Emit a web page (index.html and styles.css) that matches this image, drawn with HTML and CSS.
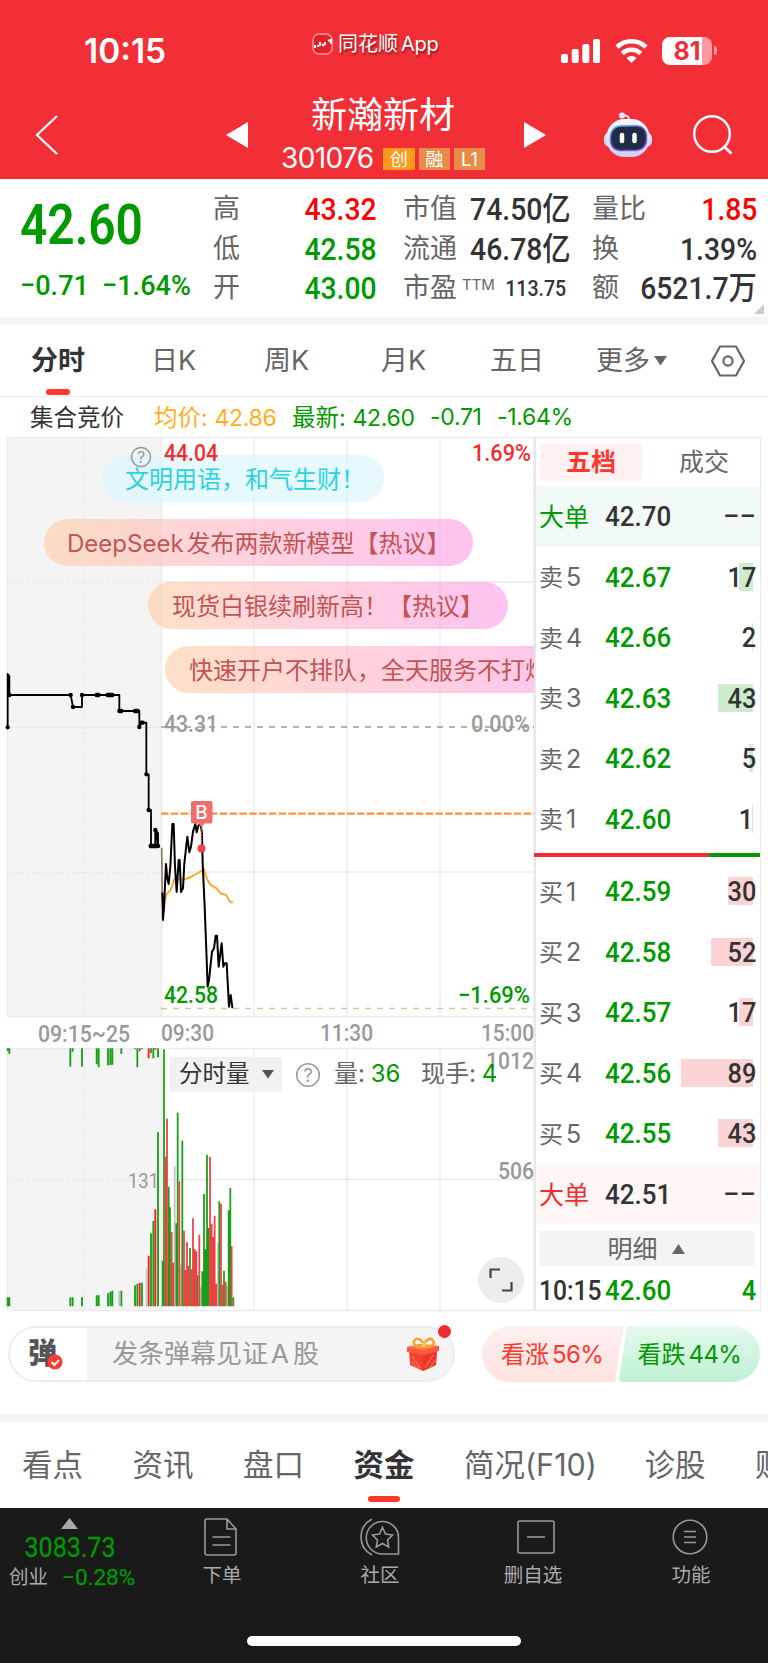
FILE: index.html
```html
<!DOCTYPE html>
<html lang="zh-CN">
<head>
<meta charset="utf-8">
<title>新瀚新材 301076</title>
<link rel="stylesheet" href="styles.css">
</head>
<body>
<header class="top">
  <div class="status">
    <span class="clock">10:15</span>
    <div class="brand">
      <svg width="21" height="22" viewBox="0 0 21 22"><rect x="1" y="1" width="19" height="20" rx="6" fill="#e32027" stroke="#ff9a98" stroke-width="1.5"/><path d="M3 12v3M5 13h2M8 9v4M10 11l2 2M13 9v3M16 8l3-1v4" stroke="#fff" stroke-width="2" fill="none"/></svg>
      <span>同花顺<span class="latin">App</span></span>
    </div>
    <div class="signals">
      <svg width="40" height="26" viewBox="0 0 40 26" fill="#fff"><rect x="0" y="16" width="7" height="9" rx="2"/><rect x="10.7" y="11" width="7" height="14" rx="2"/><rect x="21.3" y="6" width="7" height="19" rx="2"/><rect x="32" y="1" width="7" height="24" rx="2"/></svg>
      <svg width="33" height="26" viewBox="0 0 33 26" fill="none" stroke="#fff" stroke-width="4.600"><path d="M2 9a21 21 0 0 1 29 0"/><path d="M7.300 15.500a13 13 0 0 1 18.400 0"/><path d="M16.500 25l-5-5a7.500 7.500 0 0 1 10 0z" fill="#fff" stroke="none"/></svg>
      <div class="battery"><span>81</span></div>
    </div>
  </div>
  <nav class="nav">
    <svg class="back" width="24" height="42" viewBox="0 0 24 42"><path d="M22 2L2 21l20 19" fill="none" stroke="#fff" stroke-width="2.200"/></svg>
    <svg class="prev" width="22" height="26" viewBox="0 0 22 26"><path d="M22 0v26L0 13z" fill="#fff"/></svg>
    <div class="stock">
      <h1>新瀚新材</h1>
      <div class="code"><span class="code-num">301076</span><b class="hot">创</b><b>融</b><b class="lv">L1</b></div>
    </div>
    <svg class="next" width="22" height="26" viewBox="0 0 22 26"><path d="M0 0v26l22-13z" fill="#fff"/></svg>
    <svg class="robot" width="48" height="46" viewBox="0 0 48 46">
      <defs>
        <linearGradient id="shell" x1="0" y1="0" x2="0" y2="1"><stop offset="0" stop-color="#f6faff"/><stop offset="1" stop-color="#cfd0f0"/></linearGradient>
        <linearGradient id="rim" x1="0" y1="0" x2="1" y2="1"><stop offset="0" stop-color="#59c5f0"/><stop offset=".5" stop-color="#5a45b8"/><stop offset="1" stop-color="#a86bea"/></linearGradient>
      </defs>
      <path d="M25 9q1-6-7-6" fill="none" stroke="#dfe9fb" stroke-width="2"/><circle cx="18" cy="3.500" r="3" fill="#e5efff"/>
      <rect x="0" y="20" width="48" height="15" rx="6" fill="#d7dcf6"/>
      <rect x="2.500" y="7" width="43" height="38" rx="18" fill="url(#shell)"/>
      <rect x="6.500" y="14" width="36" height="24.500" rx="10" fill="#202b49" stroke="url(#rim)" stroke-width="1.500"/>
      <path d="M18 23v6M30.500 23v6" stroke="#fff" stroke-width="4.500" stroke-linecap="round"/>
    </svg>
    <svg class="search" width="40" height="42" viewBox="0 0 40 42"><circle cx="19" cy="20" r="17.800" fill="none" stroke="#fff" stroke-width="2.400"/><path d="M31 32.500l7.500 7" stroke="#fff" stroke-width="2.700"/></svg>
  </nav>
</header>

<section class="quote">
  <div class="last down">
    <div class="price"><span class="din">42.60</span></div>
    <div class="delta"><span class="din">−0.71</span><span class="din">−1.64%</span></div>
  </div>
  <dl class="col hi">
    <div><dt>高</dt><dd class="up din">43.32</dd></div>
    <div><dt>低</dt><dd class="down din">42.58</dd></div>
    <div><dt>开</dt><dd class="down din">43.00</dd></div>
  </dl>
  <dl class="col cap">
    <div><dt>市值</dt><dd class="din">74.50亿</dd></div>
    <div><dt>流通</dt><dd class="din">46.78亿</dd></div>
    <div><dt>市盈<sup>TTM</sup></dt><dd class="din small">113.75</dd></div>
  </dl>
  <dl class="col vol">
    <div><dt>量比</dt><dd class="up din">1.85</dd></div>
    <div><dt>换</dt><dd class="din">1.39%</dd></div>
    <div><dt>额</dt><dd class="din">6521.7万</dd></div>
  </dl>
  <i class="corner"></i>
</section>

<nav class="tabs">
  <span class="on">分时</span><span>日K</span><span>周K</span><span>月K</span><span>五日</span>
  <span class="more">更多<svg width="13" height="10" viewBox="0 0 13 10"><path d="M0 0h13L6.500 9.500z" fill="#666"/></svg></span>
  <svg class="gear" width="34" height="32" viewBox="0 0 34 32" fill="none" stroke="#666" stroke-width="2.200"><path d="M9 1.500h16L33 16l-8 14.500H9L1 16z"/><circle cx="17" cy="16" r="4.600"/></svg>
</nav>

<div class="legend">
  <span>集合竞价</span><span class="avg">均价: <em>42.86</em></span><span class="down now">最新: <em>42.60</em></span><em class="down d1">-0.71</em><em class="down">-1.64%</em>
</div>

<main class="board">
  <div class="chart">
    <svg width="535" height="875" viewBox="0 437 535 875">
      <g fill="#f4f4f4"><rect x="7" y="437" width="154" height="579"/><rect x="7" y="1048" width="154" height="262"/></g>
      <path d="M7 437.500H535M161 582H535M7 727.500H161M161 872H535M7 1016.500H535M7 1048.500H535M161 1179.500H535M7 1310.500H535M7.500 437V1016M7.500 1048V1310M161.500 437V1016M254 437V1016M347 437V1016M440 437V1016M254 1048V1310M347 1048V1310M440 1048V1310M161.500 1048V1310M534 437V1310" class="grid"/>
      <path d="M85 437V1016M85 1048V1310M7 582.500H161M7 873H161M7 1180.500H161" class="grid dots"/>
      <path d="M161 727H534" stroke="#999" stroke-width="1.500" stroke-dasharray="6 6"/>
      <path d="M161 1008.500H534" stroke="#dfc29a" stroke-width="1.500" stroke-dasharray="6 6"/>
      <path d="M161 813.700H534" stroke="#ff913d" stroke-width="2.300" stroke-dasharray="7.500 2.300"/>
      <g class="axis">
        <text x="164" y="731.500" textLength="54" lengthAdjust="spacingAndGlyphs" class="muted">43.31</text>
        <text x="471" y="731.500" textLength="59" lengthAdjust="spacingAndGlyphs" class="muted">0.00%</text>
        <text x="458" y="1002.500" textLength="72" lengthAdjust="spacingAndGlyphs" fill="#090">−1.69%</text>
        <text x="38" y="1041.500" textLength="92" lengthAdjust="spacingAndGlyphs" class="muted">09:15~25</text>
        <text x="161" y="1040.500" textLength="53" lengthAdjust="spacingAndGlyphs" class="muted">09:30</text>
        <text x="320" y="1040.500" textLength="53" lengthAdjust="spacingAndGlyphs" class="muted">11:30</text>
        <text x="481" y="1040.500" textLength="53" lengthAdjust="spacingAndGlyphs" class="muted">15:00</text>
        <text x="486" y="1068.500" textLength="48" lengthAdjust="spacingAndGlyphs" class="muted">1012</text>
        <text x="498" y="1178.500" textLength="36" lengthAdjust="spacingAndGlyphs" class="muted">506</text>
        <text x="128" y="1187.500" textLength="31" lengthAdjust="spacingAndGlyphs" class="muted tiny">131</text>
      </g>
      <g transform="translate(0 660) scale(.33333)" fill="none" stroke-linejoin="round" stroke-linecap="round">
        <path d="M487 775L498 705 512 690 524 655Q545 664 570 652T612 627Q620 665 635 677L650 685 662 700 678 705 690 725 697 727" stroke="#ffa51f" stroke-width="5.500"/>
        <path d="M485 565L487 720" stroke="#8a7c66" stroke-width="5"/>
        <path d="M23 200V42L28 48V105H212L219 141H246V105H358V153H418V200L426 188H439V343H446V450H453V558H474L466 510" stroke="#000" stroke-width="5.500"/>
        <path d="M467 510L474 520V558M466 510V558" stroke="#000" stroke-width="6"/>
        <path d="M487 700L489 780 492 740 498 612 502 655 506 672 511 620 517 492H521L525 620 530 696 536 600H539L543 696 549 685 553 610 562 530 568 577 573 560 579 515 586 492 590 517 595 497 602 492 606 520 608 610 614 740 619 870 623 980 627 960 636 875 642 865 647 827H651L656 920 665 850 670 920 674 910H680L687 1040 692 1005 697 1042" stroke="#000" stroke-width="6"/>
        <path d="M23 202h0M28 105h0M212 105h0M219 141h0M246 105h0M290 105h5M323 105h14M358 153h6M405 153h8M418 201h0M424 188h4M439 343h0M446 450h0M452 558h22M466 510h0" stroke="#000" stroke-width="13"/>
      </g>
      <text x="164" y="1002.500" class="axis" textLength="54" lengthAdjust="spacingAndGlyphs" fill="#090">42.58</text>
      <g><path d="M193 801h17.500q2 0 2 2v18.500q0 2-2 2h-6l-3 4-3-4H193q-2 0-2-2V803q0-2 2-2z" fill="#f26e6e"/><text x="201.500" y="819" text-anchor="middle" class="buy">B</text><path d="M201.500 828v16" stroke="#ed4048" stroke-width="1.200" stroke-dasharray="2 1"/><circle cx="201.500" cy="848.500" r="4" fill="#ed4048"/></g>
      <g transform="translate(0 1010) scale(.33333)" fill="none" stroke-width="5.500">
        <path class="g" d="M23 115v8M28 115v17M211 115v55M218 115v10M246 115v55M290 115v48M296 115v57M324 115v51M331 115v51M337 115v49M364 115v17M405 115v3M412 115v57M426 115v3M453 115v14M460 115v30M474 115v27M23 889V862M28 889V862M211 889V862M218 889V862M246 889V862M290 889V856M296 889V856M324 889V850M331 889V845M337 889V842M364 889V842M405 889V826M412 889V821M426 889V818M453 889V670M460 889V633M474 889V367"/>
        <path class="r" d="M419 115v8M446 115v30M466 115v4M419 889V818M446 889V737M466 889V598"/>
        <path class="n" d="M358 889V842M440 889V776"/>
      </g>
      <g transform="translate(0 1010) scale(.33333)" fill="none" stroke-width="5.300">
        <path class="n" d="M524 889V470M543 889V764M603 889V832M654 889V700M681 889V828"/>
        <path class="g" d="M488 889V752M492 889V118M506 889V530M510 889V592M529 889V640M533 889V308M547 889V392M570 889V714M593 889V796M607 889V784M612 889V552M617 889V718M621 889V434M626 889V654M658 889V574M672 889V782M686 889V601M691 889V534M700 889V862"/>
        <path class="r2" d="M497 889V440M501 889V326M515 889V666M520 889V758M538 889V514M552 889V662M556 889V780M561 889V697M566 889V768M575 889V778M579 889V625M584 889V717M589 889V724M598 889V674M630 889V440M635 889V641M640 889V681M644 889V617M649 889V821M663 889V581M667 889V824M677 889V815M695 889V709"/>
      </g>
    </svg>
    <div class="danmu cyan">文明用语，和气生财！</div>
    <div class="danmu d2">DeepSeek<span>发布两款新模型【热议】</span></div>
    <div class="danmu d3">现货白银续刷新高！【热议】</div>
    <div class="danmu d4">快速开户不排队，全天服务不打烊</div>
    <svg class="overlay" width="535" height="40" viewBox="0 437 535 40">
      <g class="q"><circle cx="141" cy="457" r="9.500"/><text x="141" y="463" text-anchor="middle">?</text></g>
      <g class="axis" fill="#f22c30">
        <text x="164" y="460.500" textLength="54" lengthAdjust="spacingAndGlyphs">44.04</text>
        <text x="472" y="460.500" textLength="59" lengthAdjust="spacingAndGlyphs">1.69%</text>
      </g>
    </svg>
    <div class="volbar">
      <span class="pick">分时量<svg width="12" height="9" viewBox="0 0 12 9"><path d="M0 0h12L6 8.500z" fill="#555"/></svg></span>
      <svg class="help" width="26" height="26" viewBox="0 0 26 26"><circle cx="13" cy="13" r="11.300"/><text x="13" y="19.500" text-anchor="middle">?</text></svg>
      <span class="v1">量: <em>36</em></span><span class="v2">现手: <em>4</em></span>
    </div>
    <div class="expand"><svg width="24" height="24" viewBox="0 0 24 24" fill="none" stroke="#444" stroke-width="2.200"><path d="M1.500 10V1.500H11M22.500 14v8.500H13"/></svg></div>
  </div>

  <aside class="depth">
    <div class="dtabs"><b>五档</b><span>成交</span></div>
    <div class="row big sellbig"><span>大单</span><i class="din">42.70</i><u class="din dash">−−</u></div>
    <div class="row"><span>卖<s>5</s></span><i class="din">42.67</i><u class="din">17</u><q style="width:14px"></q></div>
    <div class="row"><span>卖<s>4</s></span><i class="din">42.66</i><u class="din">2</u><q style="width:1.500px"></q></div>
    <div class="row"><span>卖<s>3</s></span><i class="din">42.63</i><u class="din">43</u><q style="width:35px"></q></div>
    <div class="row"><span>卖<s>2</s></span><i class="din">42.62</i><u class="din">5</u><q style="width:4px"></q></div>
    <div class="row"><span>卖<s>1</s></span><i class="din">42.60</i><u class="din one">1</u><q style="width:1px"></q></div>
    <div class="ratio"></div>
    <div class="row bid"><span>买<s>1</s></span><i class="din">42.59</i><u class="din">30</u><q style="width:25px"></q></div>
    <div class="row bid"><span>买<s>2</s></span><i class="din">42.58</i><u class="din">52</u><q style="width:42px"></q></div>
    <div class="row bid"><span>买<s>3</s></span><i class="din">42.57</i><u class="din">17</u><q style="width:14px"></q></div>
    <div class="row bid"><span>买<s>4</s></span><i class="din">42.56</i><u class="din">89</u><q style="width:72px"></q></div>
    <div class="row bid"><span>买<s>5</s></span><i class="din">42.55</i><u class="din">43</u><q style="width:35px"></q></div>
    <div class="row big buybig"><span>大单</span><i class="din">42.51</i><u class="din dash">−−</u></div>
    <div class="detail">明细<svg width="13" height="10" viewBox="0 0 13 10"><path d="M0 10h13L6.500 0z" fill="#666"/></svg></div>
    <div class="row tick"><span class="din">10:15</span><i class="din">42.60</i><u class="din down">4</u></div>
  </aside>
</main>

<section class="talk">
  <div class="input">
    <div class="dan">弹<svg width="16" height="16" viewBox="0 0 16 16"><circle cx="8" cy="8" r="7.500" fill="#fb3b34"/><path d="M4.500 8l3 3 4.500-5" fill="none" stroke="#fff" stroke-width="2"/></svg></div>
    <span>发条弹幕见证<span class="latin">A</span>股</span>
    <svg class="gift" width="32" height="36" viewBox="0 0 32 36"><path d="M2 12l14 4 14-4-1 16-13 6-13-6z" fill="#f0442f"/><path d="M16 16l14-4-1 16-13 6z" fill="#e8382a"/><path d="M0 10l14-3 18 2v5l-15 4-17-3z" fill="#fb5a40"/><path d="M0 10l14-3 18 2-15 4z" fill="#ff7a58"/><path d="M18 31l8-13M22 32l7-10M5 19l8 12M4 24l6 7" stroke="#ff9168" stroke-width=".8"/><path d="M17 9C9 11 5 7 7.500 3.500s8-1.500 9.500 5.500c1-7 7-8.500 9-5.500s-1 7.500-9 5.500z" fill="none" stroke="#f2a52f" stroke-width="2.600"/><circle cx="17" cy="7.500" r="2.500" fill="#ffca55"/></svg>
    <i class="reddot"></i>
  </div>
  <div class="vote"><span class="bull">看涨<em>56%</em></span><span class="bear">看跌<em>44%</em></span></div>
</section>

<nav class="subtabs"><span>看点</span><span>资讯</span><span>盘口</span><span class="on">资金</span><span class="f10">简况<em>(F10)</em></span><span>诊股</span><span>财务</span></nav>

<footer class="dock">
  <div class="items">
    <div class="index"><svg width="17" height="11" viewBox="0 0 17 11"><path d="M0 11h17L8.500 0z" fill="#aaa"/></svg><strong class="din">3083.73</strong><div><span>创业</span><em class="din">−0.28%</em></div></div>
    <div class="item i1"><svg width="36" height="38" viewBox="0 0 36 38"><path d="M4 1h20l9 10v24q0 2-2 2H4q-2 0-2-2V3q0-2 2-2zM24 1v10h9M9.500 19h18M9.500 27h18"/></svg><span>下单</span></div>
    <div class="item i2"><svg width="42" height="38" viewBox="0 0 42 38"><path d="M23.500 3.500A16 16 0 1 0 23.500 36H39.500V19.500a16 16 0 0 0-16-16zM13 1Q2 7 2 19T13 37M23.500 9.500l3 6.500 7 1-5 5 1.200 7-6.200-3.500-6.200 3.500 1.200-7-5-5 7-1z"/></svg><span>社区</span></div>
    <div class="item i3"><svg width="38" height="38" viewBox="0 0 38 38"><rect x="1" y="3" width="36" height="32" rx="1.500"/><path d="M10 19h18"/></svg><span>删自选</span></div>
    <div class="item i4"><svg width="36" height="38" viewBox="0 0 36 38"><circle cx="18" cy="19" r="16.800"/><path d="M12 13.500h12M12 19h12M12 24.500h12"/></svg><span>功能</span></div>
  </div>
  <div class="home"></div>
</footer>
</body>
</html>
```
FILE: styles.css
```css
* { box-sizing: border-box; }
body { margin: 0; width: 768px; height: 1663px; overflow: hidden; background: #fff; color: #666; font-family: "Inter", "Noto Sans CJK SC", sans-serif; font-size: 24px; line-height: 1.2; }
em, i, u, s, q { font-style: normal; text-decoration: none; }
q::before, q::after { content: none; }
svg { display: block; flex: none; }
h1, dl, dd, dt { margin: 0; font-weight: 400; }
.din { font-family: "Roboto", "Noto Sans CJK SC", sans-serif; font-weight: 500; }
.up { color: #f00; }
.down { color: #090; }

/* status bar and title bar */
.top { height: 179px; background: #f22f37; color: #fff; }
.status { height: 84px; display: grid; grid-template-columns: 312px 249px 1fr; padding-top: 18px; align-items: center; }
.clock { font-size: 33.500px; font-weight: 600; padding-left: 84px; padding-top: 1px; }
.brand { display: flex; align-items: center; gap: 5px; font-size: 20px; line-height: 24px; margin-top: -14px; text-shadow: 1px 2px 2px rgba(60,0,0,.55); }
.brand .latin { margin-left: 3px; letter-spacing: -.3px; }
.signals { display: flex; align-items: center; }
.signals svg + svg { margin-left: 14px; }
.battery { position: relative; margin-left: 14px; width: 50px; height: 28px; border-radius: 8px; background: linear-gradient(90deg, #fff 81%, #fa9a9c 81%); color: #f22f37; font-size: 25px; font-weight: 700; line-height: 28px; text-align: center; }
.battery::after { content: ""; position: absolute; right: -5px; top: 9px; width: 3px; height: 9px; border-radius: 0 4px 4px 0; background: #fa9a9c; }
.nav { height: 95px; display: flex; padding-left: 35px; }
.back { margin-top: 30px; }
.prev { margin: 38px 0 0 167px; }
.stock { width: 208px; margin-left: 33px; }
h1 { font-size: 36px; line-height: 42px; margin: 10px 0 0 30px; white-space: nowrap; }
.code { display: flex; align-items: center; margin-top: 9px; height: 28px; white-space: nowrap; }
.code-num { font-size: 28px; letter-spacing: -.6px; width: 105px; }
.code b { width: 32px; height: 22px; margin-right: 4px; background: #e58d48; font-weight: 400; font-size: 18px; line-height: 23px; text-align: center; }
.code .hot { background: #ff991a; }
.next { margin: 38px 0 0 35px; }
.robot { margin: 28px 0 0 58px; }
.search { margin: 30px 0 0 41px; }

/* quote summary */
.quote { position: relative; height: 146px; border-bottom: 8px solid #f4f4f4; display: flex; padding: 10px 11px 0 20px; color: #333; }
.last { width: 193px; }
.price { height: 76px; padding-top: 3px; font-size: 55px; line-height: 64px; }
.price .din { display: inline-block; transform: scaleX(.87); transform-origin: left; font-weight: 600; }
.delta { display: flex; font-size: 28.500px; line-height: 40px; padding-top: 1px; }
.delta .din { width: 82px; transform: scaleX(.95); transform-origin: left; white-space: nowrap; }
.col { font-size: 27px; line-height: 39.700px; }
.col div { display: flex; justify-content: space-between; height: 39.700px; white-space: nowrap; }
.col dt { color: #666; }
.col dd { font-size: 32px; transform: scaleX(.885); transform-origin: right; line-height: 40px; }
.hi { width: 164px; }
.cap { width: 163px; margin-left: 26px; }
.vol { width: 165px; margin-left: 26px; }
.cap dt { width: 64px; }
.col sup { font-size: 15px; line-height: 10px; margin-left: 5px; vertical-align: 7px; }
.col .small { font-size: 22.500px; transform: scaleX(.87); }
.corner { position: absolute; right: 4px; bottom: 3px; border: solid transparent; border-width: 0 0 10px 10px; border-bottom-color: #ccc; }

/* chart period tabs */
.tabs { position: relative; height: 72px; border-bottom: 1px solid #eee; display: grid; grid-template-columns: 120px 113px 117px 109px 106px 115px 34px; align-items: center; padding: 2px 0 0 31px; font-size: 27px; }
.tabs .on { position: relative; color: #333; font-weight: 700; }
.tabs .on::after { content: ""; position: absolute; left: 15px; bottom: -17px; width: 24px; height: 6px; border-radius: 3px; background: #ff382f; }
.more { display: flex; align-items: center; gap: 4px; }
.gear { position: relative; top: -1px; }
.legend { height: 40px; display: flex; align-items: center; padding: 2px 0 0 30px; font-size: 23.500px; color: #333; white-space: nowrap; }
.legend em { font-size: 23px; letter-spacing: -.3px; }
.avg { width: 138px; margin-left: 30px; color: #ffae1c; }
.now { width: 138px; }
.d1 { width: 67px; }

/* chart */
.board { display: flex; height: 875px; padding-right: 7px; }
.chart { position: relative; width: 534px; overflow: hidden; }
.grid { fill: none; stroke: #eaeaea; stroke-width: 1.300; }
.dots { stroke-dasharray: 2 3; stroke: #e6e6e6; }
.axis { font: 500 24px "Roboto", sans-serif; }
.muted { fill: #999; }
.tiny { font-size: 21px; font-weight: 400; }
.q circle, .help circle { fill: none; stroke: #999; stroke-width: 1.500; }
.q text { fill: #999; font-size: 16px; }
.help text { fill: #999; font-size: 18px; }
.buy { fill: #fff; font-size: 19px; font-weight: 500; }
.g { stroke: #17a017; }
.r { stroke: #fb1717; }
.r2 { stroke: #ef4043; }
.n { stroke: #c0c0c0; }
.overlay { position: absolute; left: 0; top: 0; }
.danmu { position: absolute; height: 47px; line-height: 49px; border-radius: 24px; padding-left: 24px; white-space: nowrap; color: #bf5555; background: linear-gradient(90deg, rgba(255,205,165,.62), rgba(255,185,195,.62) 38%, rgba(255,155,230,.6)); }
.cyan { left: 102px; top: 18px; width: 282px; padding-left: 23px; color: #2ad2df; background: rgba(214,245,251,.62); }
.danmu.d2 { left: 44px; top: 82px; width: 429px; padding-left: 23px; }
.danmu.d2 span { margin-left: 3px; }
.d3 { left: 148px; top: 145px; width: 360px; }
.d4 { left: 165px; top: 209px; width: 450px; }
.volbar { position: absolute; left: 169px; top: 620px; display: flex; align-items: center; height: 35px; color: #666; white-space: nowrap; }
.pick { display: flex; align-items: center; width: 113px; height: 35px; padding-left: 10px; gap: 12px; border-radius: 4px; background: rgba(240,240,240,.92); color: #333; font-size: 23.500px; }
.help { margin: 0 13px 0 13px; }
.volbar em { color: #090; }
.v1 { width: 87px; }
.v1 em, .v2 em { margin-left: -1px; }
.expand { position: absolute; left: 478px; top: 820px; width: 46px; height: 46px; border-radius: 50%; background: rgba(235,235,235,.95); display: flex; align-items: center; justify-content: center; }

/* order book */
.depth { width: 227px; border: 1px solid #e8e8e8; border-left-width: 2px; height: 874px; }
.dtabs { display: flex; height: 48px; align-items: center; padding-left: 4px; font-size: 25px; }
.dtabs b { width: 102px; height: 37px; line-height: 37px; border-radius: 4px; background: #fff2f1; color: #ff382f; text-align: center; }
.dtabs span { padding-left: 37px; }
.row { position: relative; display: flex; align-items: center; height: 60.500px; padding: 2px 4px 0 3px; white-space: nowrap; }
.row span { width: 66px; font-size: 24px; }
.row s { margin-left: 3px; font-size: 25px; }
.row i { flex: 1; font-size: 28.500px; color: #090; transform: scaleX(.91); transform-origin: left; }
.row u { position: relative; z-index: 1; font-size: 28.500px; color: #333; transform: scaleX(.89); transform-origin: right; }
.row .one { right: 3px; }
.row .dash { transform: scaleX(1.03); }
.row q { position: absolute; right: 7px; top: 16px; height: 28px; background: #cdebcd; }
.bid q { background: #fbd3d4; }
.big span { font-size: 25px; }
.big i { color: #333; }
.sellbig { background: #f1faf6; }
.sellbig span { color: #090; }
.buybig { background: #fff6f6; }
.buybig span { color: #f22c30; }
.ratio { height: 4px; margin: 3.500px 0 4.500px -2px; background: linear-gradient(90deg, #f22f37 77.500%, #090 77.500%); }
.detail { display: flex; align-items: center; justify-content: center; gap: 14px; height: 35px; margin: 7px 5px 0 3px; padding-right: 2px; background: #f4f4f4; font-size: 25px; }
.tick { height: 48px; }
.tick span { font-size: 28px; color: #333; transform: scaleX(.88); transform-origin: left; }
.row .down { color: #090; }

/* comment bar */
.talk { display: flex; height: 102px; padding: 14px 8px 0; }
.input { position: relative; width: 447px; height: 56px; border: 2px solid #ededed; border-radius: 28px; background: linear-gradient(90deg, #fff 77px, #f4f4f4 77px); display: flex; align-items: center; color: #999; font-size: 26px; }
.input .latin { margin: 0 4px 0 3px; }
.dan { position: relative; width: 102px; padding-left: 18px; font-size: 29px; font-weight: 900; color: #555; }
.dan svg { position: absolute; left: 37px; bottom: 1px; }
.gift { position: absolute; left: 397px; top: 9px; }
.reddot { position: absolute; right: 2px; top: -3px; width: 13px; height: 13px; border-radius: 50%; background: #ef2b32; }
.vote { position: relative; display: flex; margin-left: 27px; height: 56px; width: 278px; font-size: 24px; line-height: 57px; }
.vote em { margin-left: 3px; letter-spacing: -.6px; }
.vote span { padding-left: 19px; }
.bull { width: 142px; color: #ff382f; background: linear-gradient(#fff0ef, #ffe2df); border-radius: 28px 4px 4px 28px; clip-path: polygon(0 0, 100% 0, 94% 100%, 0 100%); }
.bear { width: 142px; margin-left: -5px; color: #090; background: linear-gradient(#e4f9ec, #bff0d3); border-radius: 4px 28px 28px 4px; clip-path: polygon(6% 0, 100% 0, 100% 100%, 0 100%); }

/* content tabs */
.subtabs { display: flex; height: 94px; border-top: 8px solid #f4f4f4; padding-left: 22px; font-size: 30.500px; line-height: 86px; white-space: nowrap; overflow: hidden; }
.subtabs span { position: relative; flex: none; margin-right: 49.500px; }
.subtabs .on { color: #333; font-weight: 700; }
.subtabs .on::after { content: ""; position: absolute; left: 14px; top: 74px; width: 32px; height: 6px; border-radius: 3px; background: #ff382f; }
.subtabs .f10 { width: 131px; }
.f10 em { letter-spacing: 0; }

/* bottom dock */
.dock { height: 155px; background: #1a1a1a; }
.items { position: relative; display: flex; height: 128px; padding-top: 10px; }
.index { width: 139px; display: flex; flex-direction: column; align-items: center; color: #aaa; font-size: 19.500px; }
.index strong { font-size: 27.500px; line-height: 32px; margin-top: 3px; color: #090; font-weight: 400; transform: scaleX(.91); -webkit-text-stroke: .3px #090; }
.index div { display: flex; align-items: center; height: 27px; align-self: stretch; padding-left: 9px; }
.index em { color: #090; font-size: 22.500px; margin-left: 14px; transform: scaleX(1); transform-origin: left; white-space: nowrap; font-weight: 400; -webkit-text-stroke: .3px #090; }
.item { display: flex; flex-direction: column; align-items: center; gap: 7px; width: 80px; font-size: 19.500px; line-height: 24px; color: #aaa; }
.item svg { fill: none; stroke: #999; stroke-width: 1.600; }
.i1 { margin-left: 43px; }
.i1 svg { margin-right: 3px; }
.i2 { margin-left: 78px; }
.i3 { margin-left: 73px; }
.i3 svg { margin-left: 5px; }
.i4 { margin-left: 78px; }
.i4 svg { margin-right: 3px; }
.home { width: 274px; height: 10px; border-radius: 5px; background: #fff; margin-left: 247px; }
```
